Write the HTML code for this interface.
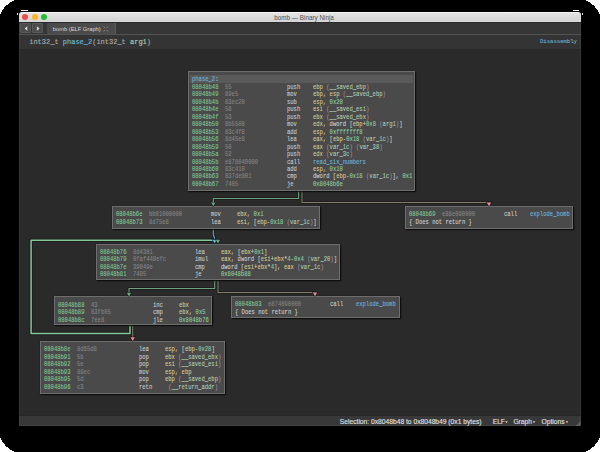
<!DOCTYPE html>
<html><head><meta charset="utf-8"><style>
*{margin:0;padding:0;box-sizing:border-box}
html,body{width:600px;height:452px;overflow:hidden;background:#fff}
#shadow{position:absolute;left:0;top:0;width:600px;height:452px;background:#000}
#win{position:absolute;left:19px;top:12px;width:562px;height:413.5px;background:#2a2a2a;overflow:hidden;border-radius:3px 3px 1px 1px}
#title{position:absolute;left:0;top:0;width:562px;height:10px;background:linear-gradient(#f6f6f6 0,#f6f6f6 0.8px,#e3e3e3 1.2px,#d4d4d4 9px,#d9d9d9 10px);font-family:"Liberation Sans",sans-serif;font-size:6.3px;color:#505050;line-height:10px;white-space:nowrap}
.tl{position:absolute;top:2px;width:6px;height:6px;border-radius:50%}
#tabbar{position:absolute;left:0;top:10px;width:562px;height:12.5px;background:#363636;border-top:1px solid #2a2a2a}
.nb{position:absolute;top:0.4px;width:11.2px;height:9.9px;background:#4c4c4c;border:1px solid #5a5a5a;border-radius:1px}
.nb svg{position:absolute;left:0;top:0}
#tab{position:absolute;left:28.3px;top:0;width:68.7px;height:11.5px;background:#4b4b4b;border-right:1px solid #5a5a5a;font-family:"Liberation Sans",sans-serif;font-size:5.75px;color:#d6d6d6;line-height:12px;padding-left:5.5px;white-space:nowrap}
#sep{position:absolute;left:0;top:21.5px;width:562px;height:1px;background:#535353}
#hdr{position:absolute;left:0;top:22.5px;width:562px;height:14px;background:#343434;font-family:"Liberation Mono",monospace;font-size:7px;line-height:14px;white-space:pre;-webkit-text-stroke:0.15px currentColor}
#graph{position:absolute;left:0;top:36.5px;width:562px;height:366.5px;background:#2a2a2a}
#status{position:absolute;left:0;top:403px;width:562px;height:10.5px;background:#383838;border-top:0.8px solid #262626;border-bottom:0.8px solid #444;font-family:"Liberation Sans",sans-serif;font-size:6.7px;color:#e2e2e2;line-height:10.5px;-webkit-text-stroke:0.12px currentColor;white-space:pre}
.blk{position:absolute;background:#4a4a4a;border:1px solid #6e6e6e;box-shadow:1px 1px 1.2px rgba(0,0,0,.78),0 0 1px rgba(0,0,0,.5);font-family:"Liberation Mono",monospace;font-size:7.5px;white-space:pre;-webkit-text-stroke:0.1px currentColor}
.hdr{position:absolute;left:1px;height:8px;background:#5a5a5a}
.row{position:absolute;left:0;height:7.48px;line-height:7.48px;width:100%}
.row span{position:absolute;top:0;transform:scaleX(0.735);transform-origin:0 50%}
.row span span{position:static;transform:none}
</style></head><body>
<div id="shadow"><svg width="600" height="452" style="position:absolute;left:0;top:0" shape-rendering="crispEdges">
<path d="M0 0 L15 0 Q4.3 4.3 0 14.6Z" fill="#fff"/>
<path d="M600 0 L585 0 Q595.7 4.3 600 14.8Z" fill="#fff"/>
<path d="M0 452 L15 452 Q4.3 447.7 0 437.2Z" fill="#fff"/>
<path d="M600 452 L585 452 Q595.7 447.7 600 436.8Z" fill="#fff"/>
<rect x="21" y="10" width="7" height="1" fill="#f4f4f4"/>
<rect x="573" y="10" width="6" height="1" fill="#f4f4f4"/>
<rect x="17" y="13" width="1" height="2" fill="#e0e0e0"/>
<rect x="582" y="13" width="1" height="2" fill="#e0e0e0"/>
</svg></div>
<div id="win">
 <div id="title"><span style="position:absolute;left:255.3px;top:0.8px">bomb — Binary Ninja</span>
  <div class="tl" style="left:3.3px;background:#f34a4b"></div>
  <div class="tl" style="left:12.7px;background:#fbb524"></div>
  <div class="tl" style="left:22px;background:#22c135"></div>
 </div>
 <div id="tabbar">
  <div class="nb" style="left:0.6px"><svg width="10" height="9"><path d="M6.3 2.2 L3.6 4.5 L6.3 6.8Z" fill="#d8d8d8"/></svg></div>
  <div class="nb" style="left:13px"><svg width="10" height="9"><path d="M3.9 2.2 L6.6 4.5 L3.9 6.8Z" fill="#d8d8d8"/></svg></div>
  <div id="tab">bomb (ELF Graph)<svg style="position:absolute;left:55.5px;top:3px" width="7" height="7"><path d="M0.5 0.5L2 2M5 0.5L3.5 2M0.5 5.5L2 4M5 5.5L3.5 4" stroke="#8a8a8a" stroke-width="0.9" fill="none"/></svg></div>
 </div>
 <div id="sep"></div>
 <div id="hdr"><span style="position:absolute;left:10.2px;color:#aaaaaa">int32_t <span style="color:#6cb6de">phase_2</span>(int32_t <span style="color:#a6d1b0">arg1</span>)</span><span style="position:absolute;left:521px;top:0.6px;font-size:5.6px;color:#6cb2d4;-webkit-text-stroke:0.08px currentColor">Disassembly</span></div>
 <div id="graph"></div>
 <div id="status"><span style="position:absolute;left:320.8px;top:0.6px">Selection: 0x8048b48 to 0x8048b49 (0x1 bytes)</span><span style="position:absolute;left:473.7px;top:0.6px">ELF</span><span style="position:absolute;left:494.4px;top:0.6px">Graph</span><span style="position:absolute;left:522.6px;top:0.6px">Options</span>
<svg style="position:absolute;left:0;top:0" width="562" height="11"><path d="M486.2 5.2 L488.8 5.2 L487.5 7.2Z M513.7 5.2 L516.3 5.2 L515 7.2Z M546.7 5.2 L549.3 5.2 L548 7.2Z" fill="#d0d0d0"/><path d="M561.5 5 L561.5 10.5 L556 10.5Z" fill="#5c5c5c"/></svg></div>
</div>
<div style="position:absolute;left:19px;top:22px;width:1px;height:403px;background:rgba(255,255,255,0.05)"></div><div style="position:absolute;left:580px;top:22px;width:1px;height:403px;background:rgba(255,255,255,0.05)"></div>
<div id="gwrap" style="position:absolute;left:0;top:0;width:600px;height:452px">
<svg style="position:absolute;left:0;top:0" width="600" height="452"><path d="M298.6 190.5 L298.6 198.5 L213.3 198.5 L213.3 203" stroke="#121214" stroke-opacity="0.55" stroke-width="2.8" fill="none" stroke-linejoin="round"/><path d="M298.6 190.5 L298.6 198.5 L213.3 198.5 L213.3 203" stroke="#6da381" stroke-width="1.05" fill="none" stroke-linejoin="round"/><path d="M302 190.5 L302 202.5 L489 202.5 L489 203" stroke="#121214" stroke-opacity="0.55" stroke-width="2.8" fill="none" stroke-linejoin="round"/><path d="M302 190.5 L302 202.5 L489 202.5 L489 203" stroke="#857f69" stroke-width="1.05" fill="none" stroke-linejoin="round"/><path d="M213.3 228 L213.3 235 L214.6 238 L214.6 240.5" stroke="#121214" stroke-opacity="0.55" stroke-width="2.8" fill="none" stroke-linejoin="round"/><path d="M213.3 228 L213.3 235 L214.6 238 L214.6 240.5" stroke="#5db4dc" stroke-width="1.05" fill="none" stroke-linejoin="round"/><path d="M130 325.5 L130 333.5 L31.1 333.5 L31.1 240.2 L218 240.2 L218 240.5" stroke="#121214" stroke-opacity="0.55" stroke-width="3.4" fill="none" stroke-linejoin="round"/><path d="M130 325.5 L130 333.5 L31.1 333.5 L31.1 240.2 L218 240.2 L218 240.5" stroke="#80c898" stroke-width="1.5" fill="none" stroke-linejoin="round"/><path d="M214.7 280.5 L214.7 288.5 L129 288.5 L129 293" stroke="#121214" stroke-opacity="0.55" stroke-width="2.8" fill="none" stroke-linejoin="round"/><path d="M214.7 280.5 L214.7 288.5 L129 288.5 L129 293" stroke="#6da381" stroke-width="1.05" fill="none" stroke-linejoin="round"/><path d="M218 280.5 L218 292.4 L315 292.4 L315 293" stroke="#121214" stroke-opacity="0.55" stroke-width="2.8" fill="none" stroke-linejoin="round"/><path d="M218 280.5 L218 292.4 L315 292.4 L315 293" stroke="#857f69" stroke-width="1.05" fill="none" stroke-linejoin="round"/><path d="M132.7 325.5 L132.7 338" stroke="#121214" stroke-opacity="0.55" stroke-width="2.8" fill="none" stroke-linejoin="round"/><path d="M132.7 325.5 L132.7 338" stroke="#857f69" stroke-width="1.05" fill="none" stroke-linejoin="round"/></svg><div class="blk" style="left:188px;top:71px;width:227px;height:120px">
<div class="hdr" style="top:2.65px;width:223px"></div>
<div class="row" style="top:4.25px"><span style="left:3px;color:#6cb6de">phase_2<span style="color:#d0d0d0">:</span></span></div>
<div class="row" style="top:11.73px"><span style="left:3px;color:#80c796">08048b48</span><span style="left:36px;color:#858585">55</span><span style="left:98px;color:#cccccc">push</span><span style="left:124px"><span style="color:#d8c98f">ebp</span> <span style="color:#a48fa4">(</span><span style="color:#aecdb6">__saved_ebp</span><span style="color:#a48fa4">)</span></span></div>
<div class="row" style="top:19.21px"><span style="left:3px;color:#80c796">08048b49</span><span style="left:36px;color:#858585">89e5</span><span style="left:98px;color:#cccccc">mov</span><span style="left:124px"><span style="color:#d8c98f">ebp</span><span style="color:#d0d0d0">,</span> <span style="color:#d8c98f">esp</span> <span style="color:#a48fa4">(</span><span style="color:#aecdb6">__saved_ebp</span><span style="color:#a48fa4">)</span></span></div>
<div class="row" style="top:26.69px"><span style="left:3px;color:#80c796">08048b4b</span><span style="left:36px;color:#858585">83ec20</span><span style="left:98px;color:#cccccc">sub</span><span style="left:124px"><span style="color:#d8c98f">esp</span><span style="color:#d0d0d0">,</span> <span style="color:#8fcfa0">0x20</span></span></div>
<div class="row" style="top:34.17px"><span style="left:3px;color:#80c796">08048b4e</span><span style="left:36px;color:#858585">56</span><span style="left:98px;color:#cccccc">push</span><span style="left:124px"><span style="color:#d8c98f">esi</span> <span style="color:#a48fa4">(</span><span style="color:#aecdb6">__saved_esi</span><span style="color:#a48fa4">)</span></span></div>
<div class="row" style="top:41.650000000000006px"><span style="left:3px;color:#80c796">08048b4f</span><span style="left:36px;color:#858585">53</span><span style="left:98px;color:#cccccc">push</span><span style="left:124px"><span style="color:#d8c98f">ebx</span> <span style="color:#a48fa4">(</span><span style="color:#aecdb6">__saved_ebx</span><span style="color:#a48fa4">)</span></span></div>
<div class="row" style="top:49.13000000000001px"><span style="left:3px;color:#80c796">08048b50</span><span style="left:36px;color:#858585">8b5508</span><span style="left:98px;color:#cccccc">mov</span><span style="left:124px"><span style="color:#d8c98f">edx</span><span style="color:#d0d0d0">,</span> <span style="color:#d0d0d0">dword</span> <span style="color:#d0d0d0">[</span><span style="color:#d8c98f">ebp</span><span style="color:#d0d0d0">+</span><span style="color:#8fcfa0">0x8</span> <span style="color:#a48fa4">(</span><span style="color:#aecdb6">arg1</span><span style="color:#a48fa4">)</span><span style="color:#d0d0d0">]</span></span></div>
<div class="row" style="top:56.610000000000014px"><span style="left:3px;color:#80c796">08048b53</span><span style="left:36px;color:#858585">83c4f8</span><span style="left:98px;color:#cccccc">add</span><span style="left:124px"><span style="color:#d8c98f">esp</span><span style="color:#d0d0d0">,</span> <span style="color:#8fcfa0">0xfffffff8</span></span></div>
<div class="row" style="top:64.09000000000002px"><span style="left:3px;color:#80c796">08048b56</span><span style="left:36px;color:#858585">8d45e8</span><span style="left:98px;color:#cccccc">lea</span><span style="left:124px"><span style="color:#d8c98f">eax</span><span style="color:#d0d0d0">,</span> <span style="color:#d0d0d0">[</span><span style="color:#d8c98f">ebp</span><span style="color:#d0d0d0">-</span><span style="color:#8fcfa0">0x18</span> <span style="color:#a48fa4">(</span><span style="color:#aecdb6">var_1c</span><span style="color:#a48fa4">)</span><span style="color:#d0d0d0">]</span></span></div>
<div class="row" style="top:71.57000000000002px"><span style="left:3px;color:#80c796">08048b59</span><span style="left:36px;color:#858585">50</span><span style="left:98px;color:#cccccc">push</span><span style="left:124px"><span style="color:#d8c98f">eax</span> <span style="color:#a48fa4">(</span><span style="color:#aecdb6">var_1c</span><span style="color:#a48fa4">)</span> <span style="color:#a48fa4">(</span><span style="color:#aecdb6">var_38</span><span style="color:#a48fa4">)</span></span></div>
<div class="row" style="top:79.05000000000003px"><span style="left:3px;color:#80c796">08048b5a</span><span style="left:36px;color:#858585">52</span><span style="left:98px;color:#cccccc">push</span><span style="left:124px"><span style="color:#d8c98f">edx</span> <span style="color:#a48fa4">(</span><span style="color:#aecdb6">var_3c</span><span style="color:#a48fa4">)</span></span></div>
<div class="row" style="top:86.53000000000003px"><span style="left:3px;color:#80c796">08048b5b</span><span style="left:36px;color:#858585">e878040000</span><span style="left:98px;color:#cccccc">call</span><span style="left:124px"><span style="color:#6cb6de">read_six_numbers</span></span></div>
<div class="row" style="top:94.01000000000003px"><span style="left:3px;color:#80c796">08048b60</span><span style="left:36px;color:#858585">83c410</span><span style="left:98px;color:#cccccc">add</span><span style="left:124px"><span style="color:#d8c98f">esp</span><span style="color:#d0d0d0">,</span> <span style="color:#8fcfa0">0x10</span></span></div>
<div class="row" style="top:101.49000000000004px"><span style="left:3px;color:#80c796">08048b63</span><span style="left:36px;color:#858585">837de801</span><span style="left:98px;color:#cccccc">cmp</span><span style="left:124px"><span style="color:#d0d0d0">dword</span> <span style="color:#d0d0d0">[</span><span style="color:#d8c98f">ebp</span><span style="color:#d0d0d0">-</span><span style="color:#8fcfa0">0x18</span> <span style="color:#a48fa4">(</span><span style="color:#aecdb6">var_1c</span><span style="color:#a48fa4">)</span><span style="color:#d0d0d0">]</span><span style="color:#d0d0d0">,</span> <span style="color:#8fcfa0">0x1</span></span></div>
<div class="row" style="top:108.97000000000004px"><span style="left:3px;color:#80c796">08048b67</span><span style="left:36px;color:#858585">7405</span><span style="left:98px;color:#cccccc">je</span><span style="left:124px"><span style="color:#8fcfa0">0x8048b6e</span></span></div>
</div>
<div class="blk" style="left:112px;top:206px;width:208px;height:22.5px">
<div class="row" style="top:4.25px"><span style="left:3px;color:#80c796">08048b6e</span><span style="left:36px;color:#858585">bb01000000</span><span style="left:98px;color:#cccccc">mov</span><span style="left:124px"><span style="color:#d8c98f">ebx</span><span style="color:#d0d0d0">,</span> <span style="color:#8fcfa0">0x1</span></span></div>
<div class="row" style="top:11.73px"><span style="left:3px;color:#80c796">08048b73</span><span style="left:36px;color:#858585">8d75e8</span><span style="left:98px;color:#cccccc">lea</span><span style="left:124px"><span style="color:#d8c98f">esi</span><span style="color:#d0d0d0">,</span> <span style="color:#d0d0d0">[</span><span style="color:#d8c98f">ebp</span><span style="color:#d0d0d0">-</span><span style="color:#8fcfa0">0x18</span> <span style="color:#a48fa4">(</span><span style="color:#aecdb6">var_1c</span><span style="color:#a48fa4">)</span><span style="color:#d0d0d0">]</span></span></div>
</div>
<div class="blk" style="left:96px;top:243.5px;width:244px;height:36.5px">
<div class="row" style="top:4.25px"><span style="left:3px;color:#80c796">08048b76</span><span style="left:36px;color:#858585">8d4301</span><span style="left:98px;color:#cccccc">lea</span><span style="left:124px"><span style="color:#d8c98f">eax</span><span style="color:#d0d0d0">,</span> <span style="color:#d0d0d0">[</span><span style="color:#d8c98f">ebx</span><span style="color:#d0d0d0">+</span><span style="color:#8fcfa0">0x1</span><span style="color:#d0d0d0">]</span></span></div>
<div class="row" style="top:11.73px"><span style="left:3px;color:#80c796">08048b79</span><span style="left:36px;color:#858585">0faf449efc</span><span style="left:98px;color:#cccccc">imul</span><span style="left:124px"><span style="color:#d8c98f">eax</span><span style="color:#d0d0d0">,</span> <span style="color:#d0d0d0">dword</span> <span style="color:#d0d0d0">[</span><span style="color:#d8c98f">esi</span><span style="color:#d0d0d0">+</span><span style="color:#d8c98f">ebx</span><span style="color:#d0d0d0">*</span><span style="color:#8fcfa0">4</span><span style="color:#d0d0d0">-</span><span style="color:#8fcfa0">0x4</span> <span style="color:#a48fa4">(</span><span style="color:#aecdb6">var_20</span><span style="color:#a48fa4">)</span><span style="color:#d0d0d0">]</span></span></div>
<div class="row" style="top:19.21px"><span style="left:3px;color:#80c796">08048b7e</span><span style="left:36px;color:#858585">39049e</span><span style="left:98px;color:#cccccc">cmp</span><span style="left:124px"><span style="color:#d0d0d0">dword</span> <span style="color:#d0d0d0">[</span><span style="color:#d8c98f">esi</span><span style="color:#d0d0d0">+</span><span style="color:#d8c98f">ebx</span><span style="color:#d0d0d0">*</span><span style="color:#8fcfa0">4</span><span style="color:#d0d0d0">]</span><span style="color:#d0d0d0">,</span> <span style="color:#d8c98f">eax</span> <span style="color:#a48fa4">(</span><span style="color:#aecdb6">var_1c</span><span style="color:#a48fa4">)</span></span></div>
<div class="row" style="top:26.69px"><span style="left:3px;color:#80c796">08048b81</span><span style="left:36px;color:#858585">7405</span><span style="left:98px;color:#cccccc">je</span><span style="left:124px"><span style="color:#8fcfa0">0x8048b88</span></span></div>
</div>
<div class="blk" style="left:404.5px;top:206px;width:168.5px;height:22.5px">
<div class="row" style="top:4.25px"><span style="left:3px;color:#80c796">08048b69</span><span style="left:36px;color:#858585">e88e090000</span><span style="left:98px;color:#cccccc">call</span><span style="left:124px"><span style="color:#6cb6de">explode_bomb</span></span></div>
<div class="row" style="top:11.73px"><span style="left:3px;color:#d0d0d0">{ Does not return }</span></div>
</div>
<div class="blk" style="left:54px;top:296.4px;width:158px;height:29px">
<div class="row" style="top:4.25px"><span style="left:3px;color:#80c796">08048b88</span><span style="left:36px;color:#858585">43</span><span style="left:98px;color:#cccccc">inc</span><span style="left:124px"><span style="color:#d8c98f">ebx</span></span></div>
<div class="row" style="top:11.73px"><span style="left:3px;color:#80c796">08048b89</span><span style="left:36px;color:#858585">83fb05</span><span style="left:98px;color:#cccccc">cmp</span><span style="left:124px"><span style="color:#d8c98f">ebx</span><span style="color:#d0d0d0">,</span> <span style="color:#8fcfa0">0x5</span></span></div>
<div class="row" style="top:19.21px"><span style="left:3px;color:#80c796">08048b8c</span><span style="left:36px;color:#858585">7ee8</span><span style="left:98px;color:#cccccc">jle</span><span style="left:124px"><span style="color:#8fcfa0">0x8048b76</span></span></div>
</div>
<div class="blk" style="left:231px;top:296px;width:169px;height:22px">
<div class="row" style="top:4.25px"><span style="left:3px;color:#80c796">08048b83</span><span style="left:36px;color:#858585">e874090000</span><span style="left:98px;color:#cccccc">call</span><span style="left:124px"><span style="color:#6cb6de">explode_bomb</span></span></div>
<div class="row" style="top:11.73px"><span style="left:3px;color:#d0d0d0">{ Does not return }</span></div>
</div>
<div class="blk" style="left:40px;top:341px;width:185px;height:52.5px">
<div class="row" style="top:4.25px"><span style="left:3px;color:#80c796">08048b8e</span><span style="left:36px;color:#858585">8d65d8</span><span style="left:98px;color:#cccccc">lea</span><span style="left:124px"><span style="color:#d8c98f">esp</span><span style="color:#d0d0d0">,</span> <span style="color:#d0d0d0">[</span><span style="color:#d8c98f">ebp</span><span style="color:#d0d0d0">-</span><span style="color:#8fcfa0">0x28</span><span style="color:#d0d0d0">]</span></span></div>
<div class="row" style="top:11.73px"><span style="left:3px;color:#80c796">08048b91</span><span style="left:36px;color:#858585">5b</span><span style="left:98px;color:#cccccc">pop</span><span style="left:124px"><span style="color:#d8c98f">ebx</span> <span style="color:#a48fa4">(</span><span style="color:#aecdb6">__saved_ebx</span><span style="color:#a48fa4">)</span></span></div>
<div class="row" style="top:19.21px"><span style="left:3px;color:#80c796">08048b92</span><span style="left:36px;color:#858585">5e</span><span style="left:98px;color:#cccccc">pop</span><span style="left:124px"><span style="color:#d8c98f">esi</span> <span style="color:#a48fa4">(</span><span style="color:#aecdb6">__saved_esi</span><span style="color:#a48fa4">)</span></span></div>
<div class="row" style="top:26.69px"><span style="left:3px;color:#80c796">08048b93</span><span style="left:36px;color:#858585">89ec</span><span style="left:98px;color:#cccccc">mov</span><span style="left:124px"><span style="color:#d8c98f">esp</span><span style="color:#d0d0d0">,</span> <span style="color:#d8c98f">ebp</span></span></div>
<div class="row" style="top:34.17px"><span style="left:3px;color:#80c796">08048b95</span><span style="left:36px;color:#858585">5d</span><span style="left:98px;color:#cccccc">pop</span><span style="left:124px"><span style="color:#d8c98f">ebp</span> <span style="color:#a48fa4">(</span><span style="color:#aecdb6">__saved_ebp</span><span style="color:#a48fa4">)</span></span></div>
<div class="row" style="top:41.650000000000006px"><span style="left:3px;color:#80c796">08048b96</span><span style="left:36px;color:#858585">c3</span><span style="left:98px;color:#cccccc">retn</span><span style="left:124px"> <span style="color:#a48fa4">(</span><span style="color:#aecdb6">__return_addr</span><span style="color:#a48fa4">)</span></span></div>
</div><svg style="position:absolute;left:0;top:0" width="600" height="452"><path d="M210.10000000000002 201.9 L216.5 201.9 L213.3 207.20000000000002Z" fill="#0e0e0e" fill-opacity="0.7"/><path d="M211.10000000000002 202.60000000000002 L215.5 202.60000000000002 L213.3 206.3Z" fill="#6da381"/><path d="M485.8 201.79999999999998 L492.2 201.79999999999998 L489 207.1Z" fill="#0e0e0e" fill-opacity="0.7"/><path d="M486.8 202.5 L491.2 202.5 L489 206.2Z" fill="#ec8c9c"/><path d="M211.4 239.1 L217.79999999999998 239.1 L214.6 244.4Z" fill="#0e0e0e" fill-opacity="0.7"/><path d="M212.4 239.8 L216.79999999999998 239.8 L214.6 243.5Z" fill="#5db4dc"/><path d="M214.8 239.1 L221.2 239.1 L218 244.4Z" fill="#0e0e0e" fill-opacity="0.7"/><path d="M215.8 239.8 L220.2 239.8 L218 243.5Z" fill="#6da381"/><path d="M125.8 292.0 L132.2 292.0 L129 297.29999999999995Z" fill="#0e0e0e" fill-opacity="0.7"/><path d="M126.8 292.7 L131.2 292.7 L129 296.4Z" fill="#6da381"/><path d="M311.8 291.8 L318.2 291.8 L315 297.09999999999997Z" fill="#0e0e0e" fill-opacity="0.7"/><path d="M312.8 292.5 L317.2 292.5 L315 296.2Z" fill="#ec8c9c"/><path d="M129.5 336.6 L135.89999999999998 336.6 L132.7 341.9Z" fill="#0e0e0e" fill-opacity="0.7"/><path d="M130.5 337.3 L134.89999999999998 337.3 L132.7 341Z" fill="#ec8c9c"/></svg>
</div>
</body></html>
